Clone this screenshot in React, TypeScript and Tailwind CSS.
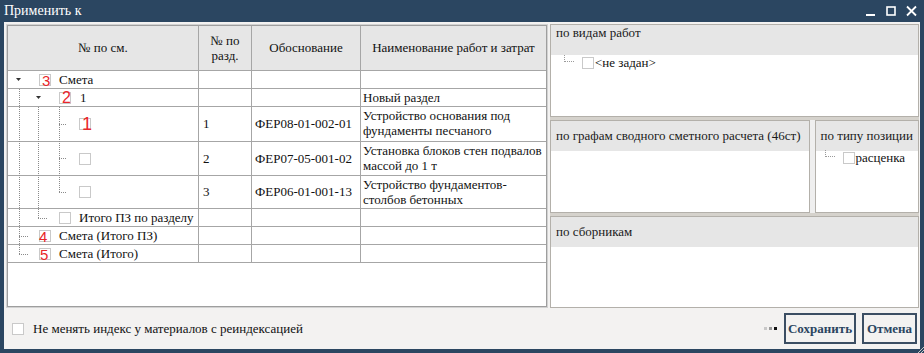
import React from 'react';

type Row = {
  h: string;
  pad: string;
  tri?: boolean;
  box: string;
  digit?: { v: string; cls: string };
  text?: string;
  textMl?: string;
  c2?: string;
  c3?: string;
  c4?: string[];
};

const rows: Row[] = [
  { h: 'h-[18px]', pad: 'pl-[8px]', tri: true, box: 'ml-[18px]', digit: { v: '3', cls: 'left-[3px] text-[15px]' }, text: 'Смета', textMl: 'ml-[8px]' },
  { h: 'h-[18px]', pad: 'pl-[28px]', tri: true, box: 'ml-[18px]', digit: { v: '2', cls: 'left-[3px] text-[16px]' }, text: '1', textMl: 'ml-[9px]', c4: ['Новый раздел'] },
  { h: 'h-[35px]', pad: 'pl-[71px]', box: '', digit: { v: '1', cls: 'left-[3px] text-[18px]' }, c2: '1', c3: 'ФЕР08-01-002-01', c4: ['Устройство основания под', 'фундаменты песчаного'] },
  { h: 'h-[34px]', pad: 'pl-[71px]', box: '', c2: '2', c3: 'ФЕР07-05-001-02', c4: ['Установка блоков стен подвалов', 'массой до 1 т'] },
  { h: 'h-[33px]', pad: 'pl-[71px]', box: '', c2: '3', c3: 'ФЕР06-01-001-13', c4: ['Устройство фундаментов-', 'столбов бетонных'] },
  { h: 'h-[18px]', pad: 'pl-[51px]', box: '', text: 'Итого ПЗ по разделу', textMl: 'ml-[8px]' },
  { h: 'h-[18px]', pad: 'pl-[31px]', box: '', digit: { v: '4', cls: 'left-[0px] text-[15px]' }, text: 'Смета (Итого ПЗ)', textMl: 'ml-[8px]' },
  { h: 'h-[18px]', pad: 'pl-[31px]', box: '', digit: { v: '5', cls: 'left-[1px] text-[15px]' }, text: 'Смета (Итого)', textMl: 'ml-[8px]' },
];

const CheckBox = ({ className = '' }: { className?: string }) => (
  <span className={`block w-[12px] h-[12px] border border-[#c9c9c9] bg-white shrink-0 ${className}`} />
);

// dotted connectors of the tree, body coordinates
const TreeLines = () => {
  const v = (x: number, y1: number, y2: number) => (
    <line x1={x + 0.5} y1={y1} x2={x + 0.5} y2={y2} />
  );
  const h = (y: number, x1: number, x2: number) => (
    <line x1={x1} y1={y + 0.5} x2={x2} y2={y + 0.5} />
  );
  return (
    <svg className="absolute left-0 top-0 pointer-events-none" width="190" height="200" stroke="#8a8a8a" strokeWidth="1" strokeDasharray="1 1" shapeRendering="crispEdges">
      {v(11, 18, 183)}
      {v(30, 36, 147)}
      {v(51, 36, 121)}
      {h(53, 51, 59)}
      {h(87, 51, 59)}
      {h(121, 51, 59)}
      {h(147, 30, 40)}
      {h(165, 11, 21)}
      {h(183, 11, 21)}
    </svg>
  );
};

const Panel = ({ title, top, children, className = '' }: { title: string; top?: boolean; children?: React.ReactNode; className?: string }) => (
  <div className={`bg-white border border-[#b3b0aa] flex flex-col ${className}`}>
    <div className={`h-[30px] bg-[#e6e6e6] px-[5px] text-[13px] text-[#1a1a1a] shrink-0 flex whitespace-nowrap ${top ? 'pt-[1px] leading-[14px]' : 'items-center'}`}>{title}</div>
    <div className="flex-1 relative">{children}</div>
  </div>
);

const TreeItem = ({ label }: { label: string }) => (
  <div className="flex items-end h-[14px]">
    <span className="block w-[10px] h-[7px] border-l border-b border-dotted border-[#9a9a9a] self-start" />
    <CheckBox className="ml-[8px]" />
    <span className="text-[13px] leading-none ml-px">{label}</span>
  </div>
);

export default function App() {
  return (
    <div className="w-[924px] h-[353px] bg-[#2b4661] flex flex-col px-[4px] pb-[4px] font-[Liberation_Serif,Times_New_Roman,serif] text-[#111] relative overflow-hidden">
      {/* Title bar */}
      <div className="h-[22px] flex items-center justify-between text-white shrink-0">
        <span className="text-[14px] leading-none pb-[1px]">Применить к</span>
        <div className="flex items-center gap-[10px] pr-[3px]">
          <svg width="10" height="12" viewBox="0 0 10 12"><rect x="0" y="9" width="9" height="2" fill="#fff" /></svg>
          <svg width="10" height="12" viewBox="0 0 10 12"><rect x="1" y="2" width="8" height="8" fill="none" stroke="#fff" strokeWidth="1.6" /></svg>
          <svg width="11" height="12" viewBox="0 0 11 12"><path d="M1 1.5l9 9M10 1.5l-9 9" stroke="#fff" strokeWidth="1.8" /></svg>
        </div>
      </div>

      <div className="flex-1 bg-[#f3f2f1] flex flex-col">
        <div className="flex pt-[2px] pl-[2px] h-[286px] shrink-0">
          {/* Left table */}
          <div className="w-[542px] h-[284px] border border-[#d2d2d2]">
            <div className="h-full border border-[#9e9e9e] bg-white flex flex-col text-[13px]">
              <div className="grid grid-cols-[191px_53px_109px_1fr] h-[45px] bg-[#e6e6e6] border-b border-[#a6a6a6] text-center">
                <div className="border-r border-[#a6a6a6] flex items-center justify-center">№ по см.</div>
                <div className="border-r border-[#a6a6a6] flex items-center justify-center leading-[15px]">№ по<br />разд.</div>
                <div className="border-r border-[#a6a6a6] flex items-center justify-center">Обоснование</div>
                <div className="flex items-center justify-center">Наименование работ и затрат</div>
              </div>
              <div className="relative">
                {rows.map((r, i) => (
                  <div key={i} className={`grid grid-cols-[191px_53px_109px_1fr] border-b border-[#a6a6a6] ${r.h}`}>
                    <div className={`border-r border-[#a6a6a6] flex items-center ${r.pad}`}>
                      {r.tri && (
                        <svg width="5" height="3" viewBox="0 0 5 3" className="shrink-0"><path d="M0 0h5L2.5 3z" fill="#333" /></svg>
                      )}
                      <span className={`relative ${r.box}`}>
                        <CheckBox />
                        {r.digit && (
                          <span className={`absolute top-1/2 -translate-y-1/2 font-[Liberation_Sans,Arial,sans-serif] text-[#e8262a] leading-none ${r.digit.cls}`}>{r.digit.v}</span>
                        )}
                      </span>
                      {r.text && <span className={`whitespace-nowrap leading-none ${r.textMl}`}>{r.text}</span>}
                    </div>
                    <div className="border-r border-[#a6a6a6] flex items-center pl-[4px]">{r.c2}</div>
                    <div className="border-r border-[#a6a6a6] flex items-center pl-[3px]">{r.c3}</div>
                    <div className={`pl-[2px] leading-[15px] ${r.c4 && r.c4.length > 1 ? 'pt-[1px]' : 'flex items-center'}`}>
                      {r.c4?.map((t, j) => <div key={j} className="whitespace-nowrap">{t}</div>)}
                    </div>
                  </div>
                ))}
                <TreeLines />
              </div>
            </div>
          </div>

          <div className="w-[2px] shrink-0" />

          {/* Right panels */}
          <div className="w-[369px] h-[284px] flex flex-col gap-[3px] bg-[#d5d2cc]">
            <Panel title="по видам работ" top className="h-[93px]">
              <div className="pl-[13px]"><TreeItem label="<не задан>" /></div>
            </Panel>
            <div className="h-[93px] flex bg-[#efefef] gap-[5px]">
              <Panel title="по графам сводного сметного расчета (46ст)" className="w-[260px]" />
              <Panel title="по типу позиции" className="flex-1">
                <div className="pl-[9px] -mt-[1px]"><TreeItem label="расценка" /></div>
              </Panel>
            </div>
            <Panel title="по сборникам" className="flex-1" />
          </div>
        </div>

        {/* Footer */}
        <div className="flex-1 flex items-center pl-[8px] pr-[3px]">
          <CheckBox className="mt-[1px]" />
          <span className="ml-[9px] text-[13px]">Не менять индекс у материалов с реиндексацией</span>
          <div className="ml-auto flex items-center">
            <div className="flex gap-[2px] mr-[7px]">
              <span className="w-[3px] h-[3px] bg-[#c8c8c8]" />
              <span className="w-[3px] h-[3px] bg-[#9a9a9a]" />
              <span className="w-[3px] h-[3px] bg-[#111]" />
            </div>
            <button className="w-[72px] h-[31px] border-2 border-[#3b4e63] bg-[#f3f2f1] text-[#2b4560] font-bold text-[13px]">Сохранить</button>
            <button className="ml-[6px] w-[55px] h-[31px] border-2 border-[#3b4e63] bg-[#f3f2f1] text-[#2b4560] font-bold text-[13px]">Отмена</button>
          </div>
        </div>
      </div>

      {/* resize grip */}
      <svg className="absolute right-0 bottom-0" width="8" height="8" viewBox="0 0 8 8">
        <path d="M8 2L2 8M8 5L5 8" stroke="#c9c9c9" strokeWidth="1" />
      </svg>
    </div>
  );
}
